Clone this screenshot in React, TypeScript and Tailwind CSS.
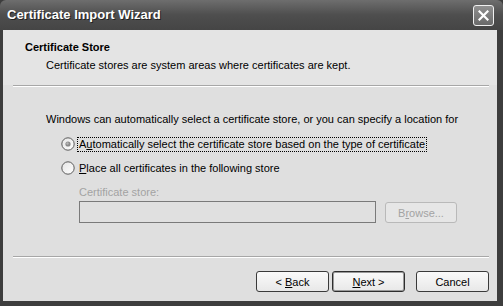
import React from "react";

const font = { fontFamily: '"Liberation Sans", Arial, sans-serif' };

function Radio({ checked }: { checked?: boolean }) {
  return (
    <svg width="14" height="14" viewBox="0 0 14 14" className="shrink-0">
      <defs>
        <linearGradient id="rg" x1="0" y1="0" x2="1" y2="1">
          <stop offset="0" stopColor="#e4e4e4" />
          <stop offset="1" stopColor="#ffffff" />
        </linearGradient>
      </defs>
      <circle cx="7" cy="7" r="6.2" fill="url(#rg)" stroke="#5a5a5a" strokeWidth="1" />
      {checked && <circle cx="7" cy="7" r="2.6" fill="#8a8a8a" />}
      {checked && <circle cx="6.5" cy="6.5" r="1.2" fill="#b5b5b5" />}
    </svg>
  );
}

function Btn({ children, def }: { children: React.ReactNode; def?: boolean }) {
  return (
    <div
      className={`w-[73px] h-[21px] flex items-center justify-center rounded-[3px] border ${def ? "border-[#2e2e2e] shadow-[inset_0_0_0_1px_#9a9a9a]" : "border-[#3a3a3a]"} bg-gradient-to-b from-[#fafafa] to-[#e8e8e8] text-[11px] text-black`}
    >
      <span className="whitespace-pre">{children}</span>
    </div>
  );
}

function Sep() {
  return (
    <div className="ml-[10px] mr-[8px]">
      <div className="h-px bg-[#a7a7a7]" />
      <div className="h-px bg-white" />
    </div>
  );
}

export default function App() {
  return (
    <div className="w-[503px] h-[306px] flex flex-col bg-[#3d3d3d] overflow-hidden" style={font}>
      <div className="h-[30px] shrink-0 flex items-center justify-between pl-[7px] pr-[9px] bg-gradient-to-b from-[#6e6e6e] via-[#4e4e4e] to-[#454545] rounded-t-[6px]">
        <span className="text-white font-bold text-[13px] [text-shadow:1px_1px_0_#222]" style={{ fontFamily: '"Liberation Sans", Arial, sans-serif' }}>
          Certificate Import Wizard
        </span>
        <div className="w-[21px] h-[21px] rounded-[3px] border border-[#f0f0f0] bg-gradient-to-b from-[#909090] to-[#6a6a6a] flex items-center justify-center">
          <svg width="11" height="11" viewBox="0 0 11 11">
            <path d="M1.5 1.5 L9.5 9.5 M9.5 1.5 L1.5 9.5" stroke="white" strokeWidth="2.2" strokeLinecap="square" />
          </svg>
        </div>
      </div>
      <div className="flex-1 flex flex-col ml-[3px] mr-[6px] mb-[5px] bg-[#dfdfdf] text-[11px] leading-[14px] text-black">
        <div className="h-[55px] shrink-0 bg-[#e4e4e4] flex flex-col pt-[10px]">
          <div className="pl-[22px] font-bold">Certificate Store</div>
          <div className="pl-[43px] mt-[4px]">Certificate stores are system areas where certificates are kept.</div>
        </div>
        <Sep />
        <div className="pl-[43px] mt-[25px]">
          Windows can automatically select a certificate store, or you can specify a location for
        </div>
        <div className="pl-[58px] mt-[10px] flex items-center h-[16px] gap-[2px]">
          <Radio checked />
          <span className="border border-dotted border-black px-[1px] leading-[13px]">
            A<u>u</u>tomatically select the certificate store based on the type of certificate
          </span>
        </div>
        <div className="pl-[58px] mt-[8px] flex items-center h-[16px] gap-[3px]">
          <Radio />
          <span className="pl-[1px]">
            <u>P</u>lace all certificates in the following store
          </span>
        </div>
        <div className="pl-[76px] mt-[9px] text-[#a3a3a3]">Certificate store:</div>
        <div className="pl-[76px] mt-[2px] flex items-start">
          <div className="w-[297px] h-[22px] border border-[#7a7a7a] bg-[#e0e0e0]" />
          <div className="ml-[9px] mt-[1px] w-[72px] h-[21px] rounded-[3px] border border-[#b9b9b9] bg-[#e6e6e6] flex items-center justify-center text-[#a3a3a3]">
            <span>B<u>r</u>owse...</span>
          </div>
        </div>
        <div className="mt-[33px]">
          <Sep />
        </div>
        <div className="mt-[13px] flex justify-end pr-[8px]">
          <Btn>&lt; <u>B</u>ack</Btn>
          <div className="ml-[3px]">
            <Btn def><u>N</u>ext &gt;</Btn>
          </div>
          <div className="ml-[11px]">
            <Btn>Cancel</Btn>
          </div>
        </div>
      </div>
    </div>
  );
}
